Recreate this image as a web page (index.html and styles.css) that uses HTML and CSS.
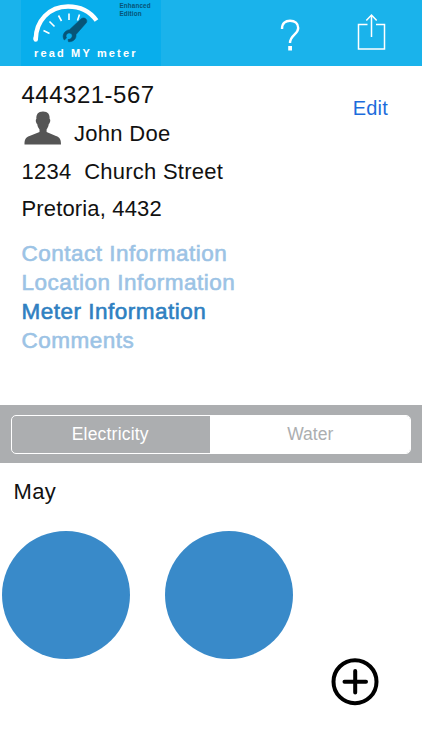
FILE: index.html
```
<!DOCTYPE html>
<html lang="en">
<head>
<meta charset="utf-8">
<title>read MY meter</title>
<link rel="stylesheet" href="styles.css">
</head>
<body>
<header class="bar">
  <svg class="logo" viewBox="0 0 140 66" role="img" aria-label="read MY meter">
    <path class="arc" d="M14.700 39.500C15 21 28 6.500 47 6.500C59 6.500 69 11.500 75.500 20.500"/>
    <path class="arc-cap" d="M14.700 38v1.500"/>
    <path class="ticks" d="M22.500 30.500l6 3M28.500 21.500l5 5M37.500 15.500l3 5.500M48 13.500v6.500M58.500 14.500l-2 6"/>
    <path class="wrench" d="M60 19C62.500 16.500 67 19 65.500 22.500L55 34.500C55.500 39 52 42 47.500 41.700L47 39.500C51 39.500 52.500 35.300 50 33.500C47 31.800 43.800 35 45.500 38L43.300 40C40.500 36 43 30.500 48.500 29.700Z"/>
    <text class="brand" x="13" y="56.700" textLength="101.500">read MY meter</text>
    <text class="edition" x="98.500" y="8" textLength="31">Enhanced</text>
    <text class="edition" x="98.500" y="15.700" textLength="22">Edition</text>
  </svg>
  <button class="help" aria-label="Help"><svg width="22" height="34" viewBox="0 0 22 34"><path d="M2 12C2 6 5.500 3.800 10 3.800C15 3.800 18.200 6.500 18.200 11C18.200 17.500 10 18 10 26"/><path class="dot" d="M8.200 29h3.800v4.500H8.200z"/></svg></button>
  <button class="share" aria-label="Share"><svg width="30" height="38" viewBox="0 0 30 38"><path d="M11.500 11.500H2.500v24.500h26v-24.500h-8.500M15.500 24V2M10.300 7.500l5.200-5.500 5.200 5.500"/></svg></button>
</header>
<main>
  <section class="account">
    <div class="details">
      <div class="number">444321-567</div>
      <div class="person"><svg class="avatar" width="38" height="34" viewBox="0 0 38 34"><path d="M19 .5C24 .5 26 3.500 25.600 8C27 8.500 26 12.500 24.800 13C24.500 16 23 17.500 22.600 18.500V21L32 25C36 26.500 37 28.500 37 33.500H.5C.5 28.500 1.500 26.500 5.500 25L15.500 21V18.500C14.500 17 13.500 15.500 13.200 13C12 12.500 11.200 8.500 12.400 8C12 3.500 14 .5 19 .5Z"/></svg><span>John Doe</span></div>
      <div class="address">1234&nbsp; Church Street</div>
      <div class="city">Pretoria, 4432</div>
    </div>
    <a class="edit">Edit</a>
  </section>
  <nav class="links">
    <a class="contact">Contact Information</a>
    <a class="location">Location Information</a>
    <a class="active">Meter Information</a>
    <a class="comments">Comments</a>
  </nav>
  <div class="segments"><div class="control"><button class="electricity">Electricity</button><button class="water">Water</button></div></div>
  <section class="readings">
    <h2>May</h2>
    <div class="circles"><div></div><div></div></div>
    <button class="add" aria-label="Add reading"><svg width="48" height="48" viewBox="0 0 48 48"><circle cx="24" cy="23.700" r="21.500"/><path d="M13.500 23.700h21.500M24.200 13v21.500"/></svg></button>
  </section>
</main>
</body>
</html>
```
FILE: styles.css
```
* { box-sizing: border-box; }
body { margin: 0; height: 750px; overflow: hidden; background: #fff; color: #111; font-family: "Liberation Sans", Arial, sans-serif; }
button { padding: 0; border: 0; background: none; font: inherit; }
svg { display: block; fill: none; }
.bar { display: flex; height: 66px; background: #1ab3eb; padding-left: 21px; }
.logo { width: 140px; height: 66px; background: #08aeec; flex: none; }
.arc { stroke: #fff; stroke-width: 4.5; }
.arc-cap { stroke: #fff; stroke-width: 4.5; stroke-linecap: round; }
.ticks { stroke: #fff; stroke-width: 1.6; }
.wrench { fill: #075477; stroke: #075477; stroke-width: .6; stroke-linejoin: round; }
.brand { fill: #fff; font-size: 11px; font-weight: bold; }
.edition { fill: #075477; font-size: 6.3px; font-weight: bold; }
.help { margin: 17px 0 0 119px; width: 22px; height: 34px; }
.help path { stroke: #fff; stroke-width: 2.4; }
.help .dot { fill: #fff; stroke: none; }
.share { margin: 13px 0 0 54px; width: 30px; height: 38px; }
.share path { stroke: #fff; stroke-width: 1.5; }
.account { display: flex; justify-content: space-between; height: 172px; padding: 14px 34px 0 21.5px; }
.details { font-size: 22px; white-space: nowrap; }
.number { height: 30px; line-height: 30px; font-size: 24px; letter-spacing: .5px; }
.person { display: flex; height: 43px; padding-top: 1px; gap: 12px; margin-left: 2.5px; line-height: 46px; letter-spacing: .3px; }
.avatar { fill: #555; }
.address { height: 37px; line-height: 37px; letter-spacing: .25px; }
.city { height: 38px; line-height: 38px; letter-spacing: .15px; }
.edit { margin-top: 14px; height: 28px; line-height: 28px; color: #1c6cdc; font-size: 20px; letter-spacing: .2px; }
.links { display: flex; flex-direction: column; height: 167px; padding: 1px 0 0 21.5px; color: #9cc3e5; font-size: 22.5px; -webkit-text-stroke: .6px currentColor; letter-spacing: .5px; }
.links a { height: 29px; line-height: 29px; }
.links .active { color: #2f80c1; }
.segments { height: 58px; padding: 10px 11px; background: #acaeb0; }
.control { display: grid; grid-template-columns: 197.5px 1fr; height: 39px; border: 1.5px solid #fff; border-radius: 5px; overflow: hidden; font-size: 17.5px; }
.electricity { color: #fff; padding-right: 1px; letter-spacing: .2px; }
.water { background: #fff; color: #acaeb0; padding-left: 1px; }
.readings { position: relative; height: 287px; }
h2 { margin: 0; padding: 13px 0 0 13.5px; height: 68px; font-size: 22px; line-height: 31px; font-weight: normal; letter-spacing: .3px; }
.circles { display: flex; gap: 35.3px; padding-left: 2.1px; }
.circles div { width: 128px; height: 128px; border-radius: 50%; background: #398ac9; }
.add { position: absolute; left: 331px; top: 195px; width: 48px; height: 48px; }
.add svg { stroke: #000; stroke-width: 4; stroke-linecap: round; }
```
